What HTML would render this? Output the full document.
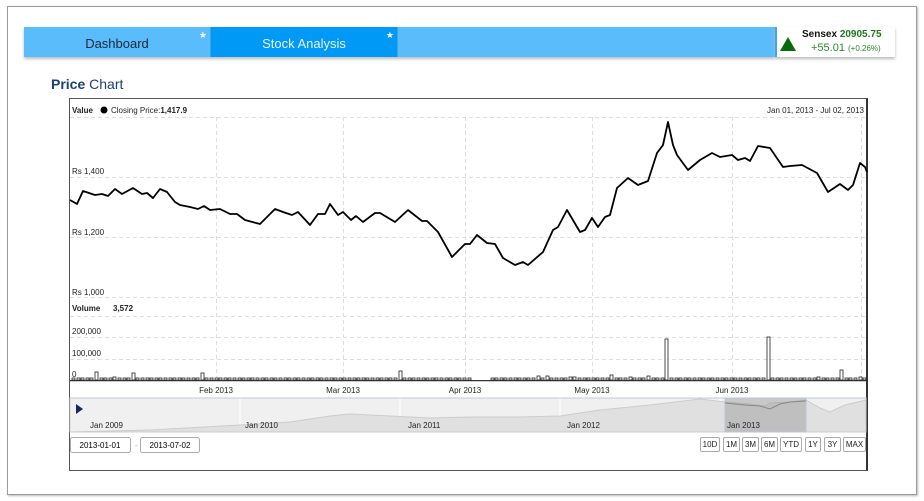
<!DOCTYPE html>
<html><head><meta charset="utf-8"><style>
*{margin:0;padding:0;box-sizing:border-box}
body{width:924px;height:501px;background:#fff;font-family:"Liberation Sans",Arial,sans-serif;position:relative;overflow:hidden}
.frame{position:absolute;left:7px;top:6px;width:910px;height:489px;border:1px solid #9a9a9a;box-shadow:1px 1px 2px #bbb}
.nav{position:absolute;left:24px;top:27px;width:751px;height:30px;background:#5bbcfb;box-shadow:0 2px 3px #bbb}
.tab{position:absolute;top:0;height:30px;line-height:34px;text-align:center;font-size:13px}
.star{position:absolute;top:-9px;right:3px;color:#fff;font-size:9px}
.sx{position:absolute;left:775px;top:27px;width:120px;height:30px;border-left:2px solid #3ea5ea;box-shadow:0 2px 3px #bbb;background:#fff}
.title{position:absolute;left:51px;top:76px;font-size:14px;color:#1d3f73}
.chart{position:absolute;left:69px;top:98px;width:799px;height:373px;border:1px solid #555;border-right:2px solid #333}
.btn{position:absolute;top:437px;height:15px;border:1px solid #aaa;border-radius:2px;font-size:8px;line-height:13px;text-align:center;color:#222;background:#fff}
</style></head><body>
<div class="frame"></div>
<div class="nav">
 <div class="tab" style="left:0;width:186px;color:#1a2a3a">Dashboard<span class="star">★</span></div>
 <div class="tab" style="left:186px;width:188px;background:#0099f5;color:#e8f4ff;border-left:1px solid #3aa6ee;border-right:1px solid #3aa6ee">Stock Analysis<span class="star">★</span></div>
</div>
<div class="sx">
 <svg style="position:absolute;left:3px;top:10px" width="16" height="14"><polygon points="8,0 16,14 0,14" fill="#0a6b0a"/></svg>
 <div style="position:absolute;left:25px;top:2px;font-size:10px;font-weight:bold;color:#111">Sensex <span style="color:#1a7a1a">20905.75</span></div>
 <div style="position:absolute;left:34px;top:15px;font-size:11px;color:#2a8a2a">+55.01 <span style="font-size:8px">(+0.26%)</span></div>
</div>
<div class="title"><b>Price</b> Chart</div>
<div class="chart"></div>
<svg style="position:absolute;left:0;top:0" width="924" height="501" font-family="Liberation Sans,Arial,sans-serif">
<g stroke="#ddd" stroke-dasharray="4,3" stroke-width="1" fill="none">
<line x1="70" y1="117.5" x2="866" y2="117.5"/><line x1="70" y1="177.5" x2="866" y2="177.5"/><line x1="70" y1="237.5" x2="866" y2="237.5"/><line x1="70" y1="297.5" x2="866" y2="297.5"/>
<line x1="70" y1="316.5" x2="866" y2="316.5"/><line x1="70" y1="337.5" x2="866" y2="337.5"/><line x1="70" y1="359.5" x2="866" y2="359.5"/>
<line x1="216.5" y1="117" x2="216.5" y2="380"/><line x1="343.5" y1="117" x2="343.5" y2="380"/><line x1="465.5" y1="117" x2="465.5" y2="380"/><line x1="592.5" y1="117" x2="592.5" y2="380"/><line x1="732.5" y1="117" x2="732.5" y2="380"/><line x1="861.5" y1="117" x2="861.5" y2="380"/>
</g>
<g font-size="8" fill="#222">
<text x="72" y="113" font-weight="bold">Value</text><circle cx="104" cy="110" r="3.5" fill="#000"/><text x="111" y="113">Closing Price:<tspan font-weight="bold">1,417.9</tspan></text>
<text x="864" y="113" text-anchor="end">Jan 01, 2013 - Jul 02, 2013</text>
<text x="72" y="174">Rs 1,400</text><text x="72" y="235">Rs 1,200</text><text x="72" y="295">Rs 1,000</text>
<text x="72" y="311" font-weight="bold">Volume</text><text x="113" y="311" font-weight="bold">3,572</text>
<text x="72" y="334">200,000</text><text x="72" y="356">100,000</text><text x="72" y="377">0</text>
<text x="216" y="393" text-anchor="middle">Feb 2013</text><text x="343" y="393" text-anchor="middle">Mar 2013</text><text x="465" y="393" text-anchor="middle">Apr 2013</text><text x="592" y="393" text-anchor="middle">May 2013</text><text x="732" y="393" text-anchor="middle">Jun 2013</text>
</g>
<polyline fill="none" stroke="#000" stroke-width="1.8" stroke-linejoin="round" points="70,200 77,204 83,191 95,195 102,194 108,196 115,189 122,194 133,188 142,194 147,193 153,198 160,189 167,192 175,202 180,205 190,207 198,209 204,206 210,210 220,209 230,214 237,214 245,220 260,224 275,209 283,212 292,215 298,212 310,225 318,214 325,214 330,204 338,215 343,212 351,220 356,216 363,222 375,213 380,213 395,222 408,210 422,221 427,221 438,232 452,257 465,244 470,244 477,235 487,243 495,244 503,258 515,265 523,262 528,265 543,252 553,230 558,227 567,210 580,232 585,230 592,218 598,227 605,217 610,215 617,188 628,178 638,185 648,181 657,153 663,145 668,122 673,145 677,155 688,170 700,160 712,153 720,157 732,155 738,160 745,158 750,161 758,146 770,148 783,167 790,166 802,165 817,173 828,192 840,184 848,190 853,185 860,163 865,167 867,172"/>
<line x1="70" y1="380.5" x2="866" y2="380.5" stroke="#333"/>
<g id="bars" fill="#fff" stroke="#222" stroke-width="0.8"></g>
<line x1="70" y1="381.5" x2="866" y2="381.5" stroke="#ccc"/>
<rect x="70" y="398" width="796" height="34" fill="#f0f0f0" stroke="#d8d8d8"/>
<g stroke="#fff"><line x1="240" y1="398" x2="240" y2="432"/><line x1="400" y1="398" x2="400" y2="432"/><line x1="560" y1="398" x2="560" y2="432"/><line x1="720" y1="398" x2="720" y2="432"/></g>
<path d="M70,432 L150,430 L240,425 L290,422 L330,416 L350,414 L390,416 L430,418 L470,417 L520,417 L560,416 L600,410 L650,405 L700,399 L725,402 L750,404 L765,406 L770,403 L790,402 L806,400 L820,408 L830,412 L845,405 L866,400 L866,432 Z" fill="#e0e0e0" stroke="#cccccc"/>
<rect x="725" y="398" width="81" height="34" fill="rgba(150,150,150,0.45)" stroke="#b8c4d8"/>
<polyline points="725,403 745,405 760,406 770,409 780,404 790,402 806,401" fill="none" stroke="#888"/>
<line x1="70" y1="398" x2="725" y2="398" stroke="#c0c8d8"/><line x1="806" y1="398" x2="866" y2="398" stroke="#c0c8d8"/>
<polygon points="76,404 83,409 76,414" fill="#13285e"/>
<g font-size="8" fill="#222"><text x="90" y="428">Jan 2009</text><text x="245" y="428">Jan 2010</text><text x="408" y="428">Jan 2011</text><text x="567" y="428">Jan 2012</text><text x="727" y="428">Jan 2013</text></g>
<rect x="70.5" y="437.5" width="60" height="15" rx="2" fill="#fff" stroke="#aaa"/><text x="100" y="448" font-size="8" text-anchor="middle">2013-01-01</text>
<text x="135" y="448" font-size="8" fill="#aaa">-</text>
<rect x="140.5" y="437.5" width="59" height="15" rx="2" fill="#fff" stroke="#aaa"/><text x="170" y="448" font-size="8" text-anchor="middle">2013-07-02</text>
</svg>
<div class="btn" style="left:700px;width:20px">10D</div>
<div class="btn" style="left:723px;width:17px">1M</div>
<div class="btn" style="left:742px;width:17px">3M</div>
<div class="btn" style="left:761px;width:17px">6M</div>
<div class="btn" style="left:780px;width:22px">YTD</div>
<div class="btn" style="left:805px;width:16px">1Y</div>
<div class="btn" style="left:824px;width:17px">3Y</div>
<div class="btn" style="left:843px;width:23px">MAX</div>
<script>
var g=document.getElementById('bars'),s='';
var big={93:372,112:377,130:373,200:373,399:371,447:378,538:376,546:376,571:377,610:375,630:377,648:376,667:339,768:337,818:377,840:370,857:377};
for(var x=72;x<866;x+=4.6){var xi=Math.round(x),t=378;
for(var k in big){if(Math.abs(k-xi)<2.4)t=big[k];}
if(xi>470&&xi<490)continue;
s+='<rect x="'+xi+'" y="'+t+'" width="3" height="'+(380-t)+'"/>';}
g.innerHTML=s;
</script>
</body></html>
